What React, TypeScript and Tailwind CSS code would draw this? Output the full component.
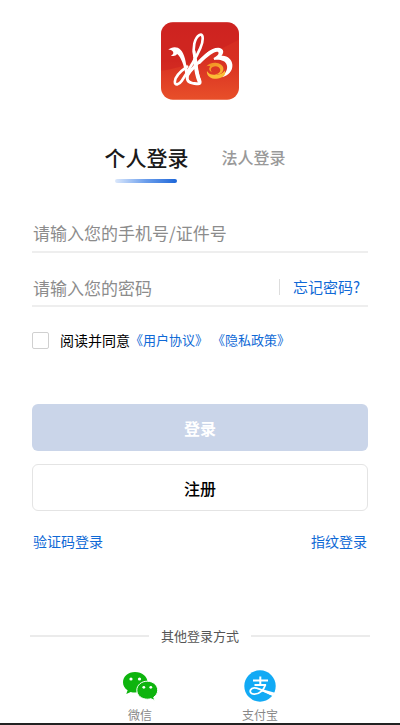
import React, { useState } from 'react';

const Logo: React.FC = () => (
  <svg viewBox="33 30 236 234" className="h-[78px] w-[78px]" role="img" aria-label="logo">
    <defs>
      <linearGradient id="logoBg" x1="0" y1="0" x2="0" y2="1">
        <stop offset="0" stopColor="#d32a22" />
        <stop offset="0.5" stopColor="#d83022" />
        <stop offset="1" stopColor="#e84f29" />
      </linearGradient>
      <linearGradient id="logoSwirl" x1="0" y1="0" x2="1" y2="1">
        <stop offset="0" stopColor="#f08a22" />
        <stop offset="1" stopColor="#fbb834" />
      </linearGradient>
    </defs>
    <rect x="33" y="30" width="236" height="234" rx="36" fill="url(#logoBg)" />
    <path d="M33 176C90 172 160 140 269 82V66C269 46 253 30 233 30H69C49 30 33 46 33 66Z" fill="#c6181e" opacity="0.4" />
    <path d="M55 113C62 106 74 103 84 107C97 113 105 130 109 157L116 179L107 188C103 163 95 137 82 126C78 131 70 134 63 130C70 127 72 123 69 118C65 114 60 113 55 113Z" fill="#fff" />
    <g fill="none" stroke="#fff" strokeLinecap="round" strokeLinejoin="round">
      <path d="M134 131C129 108 133 78 150 68C163 63 161 88 152 108C139 137 116 176 96 207C88 219 74 223 75 209C76 194 92 178 112 164" strokeWidth="8" />
      <path d="M133 118C137 150 138 180 150 207C155 219 145 216 128 214C109 211 108 194 121 179C139 158 160 134 181 121" strokeWidth="9" />
      <path d="M136 143C139 167 140 187 149 207" strokeWidth="12" />
    </g>
    <path d="M140 155C160 130 184 107 206 107C222 108 226 121 216 131C233 129 248 142 249 158C250 177 237 191 217 196C229 183 236 172 232 159C227 145 211 142 194 144L192 138C203 133 210 125 206 120C199 115 181 126 151 156Z" fill="#fff" />
    <path d="M170 164C176 155 190 151 202 153C216 155 225 165 221 176C218 186 207 190 197 187C207 186 214 180 212 172C209 164 199 160 189 165C183 168 182 175 187 181C178 177 177 169 182 164C178 162 174 162 170 164Z" fill="url(#logoSwirl)" />
    <path d="M172 177C178 187 188 190 199 188C210 190 220 185 226 176C232 190 217 201 200 201C184 201 170 192 172 177Z" fill="#fbbd36" />
  </svg>
);

const WechatIcon: React.FC = () => (
  <svg viewBox="0 0 36 30" className="h-[32px] w-[36px]" aria-hidden="true">
    <path d="M13 1C6 1 1 5.6 1 11.3C1 14.600 2.700 17.400 5.600 19.300L4.300 23L8.700 20.900C10 21.300 11.500 21.500 13 21.500C20 21.500 25.500 17 25.500 11.300C25.500 5.600 20 1 13 1Z" fill="#0eb40e" />
    <path d="M25.300 10.200C19.500 10.200 14.800 14.100 14.800 19.200C14.800 24.300 19.500 28.200 25.300 28.200C26.600 28.200 27.800 28 28.900 27.700L32.800 29.500L31.700 26.200C34.200 24.500 35.700 22 35.700 19.200C35.700 14.100 31.100 10.200 25.300 10.200Z" fill="#0eb40e" stroke="#fff" strokeWidth="1" />
    <circle cx="9" cy="8" r="1.600" fill="#fff" />
    <circle cx="17.500" cy="8" r="1.600" fill="#fff" />
    <circle cx="21.800" cy="16.300" r="1.400" fill="#fff" />
    <circle cx="28.800" cy="16.300" r="1.400" fill="#fff" />
  </svg>
);

const AlipayIcon: React.FC = () => (
  <svg viewBox="0 0 32 32" className="h-[32px] w-[32px]" aria-hidden="true">
    <circle cx="16" cy="16" r="15.700" fill="#12aaf5" />
    <g fill="none" stroke="#fff">
      <path d="M9 10.500H24M16.300 6.500V15M10.500 15H22" strokeWidth="2" />
      <path d="M21.600 14.500C20 19.500 15.500 24.500 10 24.200C6.800 24 5.700 21.800 6.500 20C7.600 17.700 11.500 17.600 15.500 19.200C19.500 20.800 25 23.600 29.500 25" strokeWidth="1.800" />
    </g>
    <path d="M18.500 19.300L30.900 22.700L28.800 26L18 21.200Z" fill="#fff" />
  </svg>
);

const providers = [
  { name: '微信', Icon: WechatIcon },
  { name: '支付宝', Icon: AlipayIcon },
];

const App: React.FC = () => {
  const [agreed, setAgreed] = useState(false);

  return (
    <div className="flex min-h-screen flex-col border-b-2 border-[#222] bg-white font-['Noto_Sans_CJK_SC',sans-serif] text-black">
      <header className="flex justify-center pt-[22px]">
        <Logo />
      </header>

      <nav className="mt-[39px] flex items-start justify-center gap-[33px] pr-[10px]">
        <button className="flex flex-col items-center text-[21px] leading-9 font-medium text-[#1a1a1a]">
          个人登录
          <span className="mt-1 h-1 w-[62px] rounded-full bg-gradient-to-r from-[#dce8fb] via-[#6a9deb] to-[#1a66d8]"></span>
        </button>
        <button className="text-base leading-9 font-medium text-[#999]">法人登录</button>
      </nav>

      <form className="mx-8 mt-8" onSubmit={(e) => e.preventDefault()}>
        <div className="flex h-[38px] border-b-2 border-[#eee]">
          <input
            type="text"
            aria-label="手机号/证件号"
            placeholder="请输入您的手机号/证件号"
            className="min-w-0 flex-1 pl-px text-[17px] outline-none placeholder:text-[#8c8c8c]"
          />
        </div>
        <div className="mt-4 flex h-[38px] items-center border-b-2 border-[#eee]">
          <input
            type="password"
            aria-label="密码"
            placeholder="请输入您的密码"
            className="h-full min-w-0 flex-1 pl-px text-[17px] outline-none placeholder:text-[#8c8c8c]"
          />
          <a href="#forgot" className="border-l border-[#ddd] pr-2 pl-[13px] text-[15px] leading-4 text-[#0f69d6]">
            忘记密码?
          </a>
        </div>

        <div className="mt-[23px] flex items-center text-[14px] leading-5">
          <input
            id="agree"
            type="checkbox"
            checked={agreed}
            onChange={(e) => setAgreed(e.target.checked)}
            className="h-[17px] w-[17px] shrink-0 appearance-none rounded-xs border border-[#d0d0d0] bg-white checked:bg-[#0f69d6]"
          />
          <label htmlFor="agree" className="pl-[11px]">阅读并同意</label>
          <div className="flex gap-1 text-[13px] text-[#0f69d6]">
            <a href="#terms">《用户协议》</a>
            <a href="#privacy">《隐私政策》</a>
          </div>
        </div>

        <button type="submit" className="mt-[54px] h-[47px] w-full rounded-md bg-[#cad5e9] text-base font-bold text-white">
          登录
        </button>
        <button type="button" className="mt-[13px] h-[47px] w-full rounded-md border border-[#e4e4e4] text-base font-medium">
          注册
        </button>
      </form>

      <div className="mx-8 mt-5 flex justify-between px-px text-[14px] leading-5 text-[#0f69d6]">
        <a href="#sms">验证码登录</a>
        <a href="#fingerprint">指纹登录</a>
      </div>

      <div className="mx-[30px] mt-[75px] flex items-center gap-3 text-[13px] leading-5 text-[#555]">
        <span className="h-[2px] flex-1 bg-[#ebebeb]"></span>
        其他登录方式
        <span className="h-[2px] flex-1 bg-[#ebebeb]"></span>
      </div>

      <div className="mt-6 grid grid-cols-2 px-20">
        {providers.map(({ name, Icon }) => (
          <button key={name} className="flex flex-col items-center text-[12px] leading-4 text-[#888]">
            <Icon />
            <span className="mt-[5px]">{name}</span>
          </button>
        ))}
      </div>
    </div>
  );
};

export default App;
